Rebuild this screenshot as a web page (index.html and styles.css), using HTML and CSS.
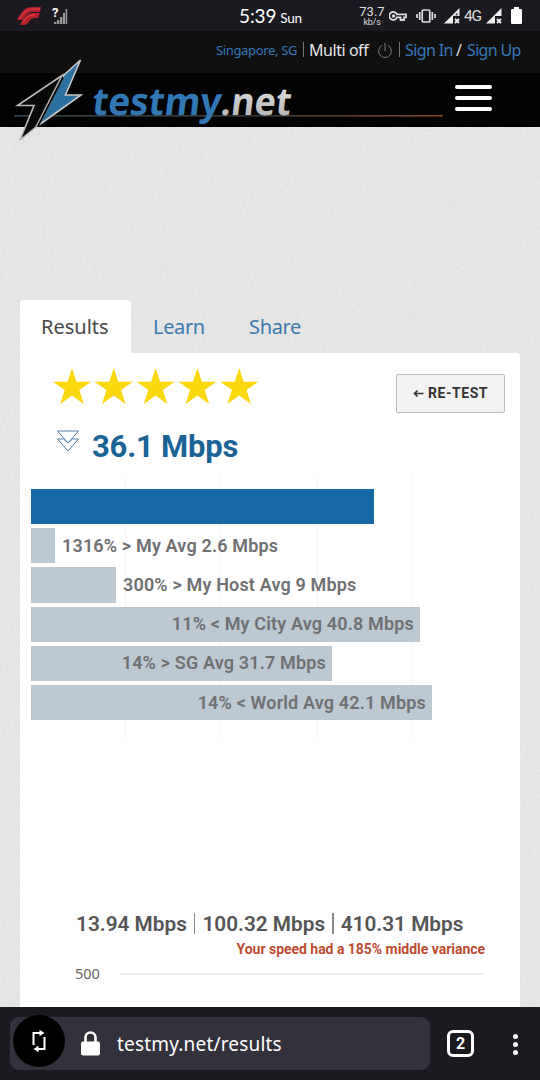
FILE: index.html
```html
<!DOCTYPE html>
<html lang="en">
<head>
<meta charset="utf-8">
<title>testmy.net results</title>
<link rel="stylesheet" href="styles.css">
</head>
<body>
<div class="screen">
  <div class="status">
    <svg class="carrier" width="54" height="31" viewBox="0 0 54 31">
      <path d="M1 20C6 11 9 7 16 7H25L24 12H16C12 12 9 17 7 20Z" fill="#a8222b"/>
      <path d="M4 25C10 15 12 13 19 13H24L22 18H18C13 19 12 25 9 25Z" fill="#b5202a"/>
      <path d="M3 19C8 12 11 9 17 9H24M6 23C11 16 13 15 19 15" fill="none" stroke="#df3439" stroke-width="1.3"/>
      <path d="M38 22h2.4v2H38zM41 20h2.4v4H41zM44 17h2.4v7H44zM47 13h2v11h-2zM49.6 9h1.6v15h-1.6z" fill="#999"/>
      <text x="36" y="17" class="unknown">?</text>
    </svg>
    <div class="clock">5:39 <small>Sun</small></div>
    <div class="rate"><span>73.7</span><small>kb/s</small></div>
    <svg class="key" width="18" height="10" viewBox="0 0 18 10" fill="none" stroke="#ddd" stroke-width="1.8"><path d="M8 3.4H17V6.4H15V9H11.5V6.4H8A4 4 0 1 1 8 3.4Z"/><circle cx="4.6" cy="5" r=".8"/></svg>
    <svg class="vibrate" width="20" height="14" viewBox="0 0 20 14" fill="none" stroke="#ddd" stroke-width="1.7"><rect x="6.2" y="1" width="7.6" height="12" rx="1"/><path d="M3.7 3v8M16.3 3v8M1 5v4M19 5v4"/></svg>
    <svg class="signal" width="18" height="18" viewBox="0 0 18 18"><path d="M1 16.5L16.5 1V9H10v7.5Z" fill="#eee"/><path d="M12 12l4 4m0-4l-4 4" stroke="#eee" stroke-width="1.8"/><path d="M12.5 7.5l2-2v3h-2z" fill="#444"/></svg>
    <span class="net">4G</span>
    <svg class="signal second" width="18" height="18" viewBox="0 0 18 18"><path d="M1 16.5L16.5 1V9H10v7.5Z" fill="#eee"/><path d="M12 12l4 4m0-4l-4 4" stroke="#eee" stroke-width="1.8"/></svg>
    <svg class="battery" width="11" height="17" viewBox="0 0 11 17"><path d="M3 0h5v2h2q1 0 1 1v13q0 1-1 1H1q-1 0-1-1V3q0-1 1-1h2z" fill="#fff"/></svg>
  </div>

  <div class="account">
    <span class="place">Singapore, SG</span><i class="sep"></i><span class="multi">Multi off</span>
    <svg class="power" width="16" height="17" viewBox="0 0 16 17" fill="none" stroke="#777" stroke-width="1"><path d="M5 3.5A6.4 6.4 0 1 0 11 3.5M8 1v8"/></svg>
    <i class="sep"></i><span class="signin">Sign In</span><span class="slash">/</span><span class="signup">Sign Up</span>
  </div>

  <header class="masthead">
    <svg class="logo" width="430" height="90" viewBox="14 55 430 90">
      <defs>
        <linearGradient id="rule" x1="0" x2="1"><stop offset="0" stop-color="#34434c"/><stop offset=".55" stop-color="#3a3836"/><stop offset="1" stop-color="#82412c"/></linearGradient>
        <linearGradient id="silver" x1="0" y1="0" x2="0" y2="1"><stop offset="0" stop-color="#eee"/><stop offset="1" stop-color="#aaa"/></linearGradient>
      </defs>
      <rect x="14" y="115" width="429" height="1.6" fill="url(#rule)"/>
      <path d="M62 75.5L17.5 105.5H34L20 140L36 127Z" fill="#070808" stroke="#b8b8b8" stroke-width="1.6"/>
      <path d="M80.5 60L64 75L39 125L81 95H65.5Z" fill="#2b709f" stroke="#c5c5c5" stroke-width="1.6"/>
      <path d="M63 77L38 126" stroke="#080808" stroke-width="2"/>
      <path d="M61 78L36 127" stroke="#a8a8a8" stroke-width="1"/>
      <g transform="translate(91 115) skewX(-7)"><text class="word blue" textLength="129" lengthAdjust="spacingAndGlyphs">testmy</text></g>
      <g transform="translate(220 115) skewX(-7)"><text class="word silver" textLength="70" lengthAdjust="spacingAndGlyphs">.net</text></g>
    </svg>
    <div class="burger"><i></i><i></i><i></i></div>
  </header>

  <main class="page">
    <svg class="grain" width="540" height="880"><filter id="paper" x="0" y="0" width="100%" height="100%"><feTurbulence type="fractalNoise" baseFrequency=".35" numOctaves="2" seed="4"/><feColorMatrix values="0 0 0 0 .3  0 0 0 0 .3  0 0 0 0 .3  .5 0 0 0 -.2"/></filter><rect width="540" height="880" filter="url(#paper)" opacity=".3"/></svg>
    <nav class="tabs"><span class="tab active">Results</span><span class="tab learn">Learn</span><span class="tab">Share</span></nav>
    <section class="card">
      <div class="top">
        <svg class="stars" width="206" height="38" viewBox="0 0 206 38" fill="#fbd70d">
          <defs><path id="star" d="M19 0L23.5 13.7H38L26.3 22L30.8 36L19 27.4L7.2 36L11.7 22L0 13.7H14.5Z"/></defs>
          <use href="#star"/><use href="#star" x="41.8"/><use href="#star" x="83.6"/><use href="#star" x="125.4"/><use href="#star" x="167.2"/>
        </svg>
        <div class="retest"><svg width="11" height="9" viewBox="0 0 11 9" fill="none" stroke="#333" stroke-width="1.6"><path d="M10.5 4.5H1.5M4.5 1.5L1.5 4.5L4.5 7.5"/></svg><span>RE-TEST</span></div>
      </div>
      <div class="speed">
        <svg width="24" height="23" viewBox="0 0 24 23" fill="none" stroke="#527da4" stroke-width="1"><path d="M1.5 1H22.5L12 13ZM1.5 9H7.5L12 13L16.5 9H22.5L12 21Z"/></svg>
        <strong>36.1 Mbps</strong>
      </div>
      <div class="chart">
        <div class="bar main" style="width:343px"></div>
        <div class="row"><div class="bar" style="width:24px"></div><span class="label">1316% &gt; My Avg 2.6 Mbps</span></div>
        <div class="row"><div class="bar" style="width:85px"></div><span class="label">300% &gt; My Host Avg 9 Mbps</span></div>
        <div class="bar" style="width:389px"><span class="label">11% &lt; My City Avg 40.8 Mbps</span></div>
        <div class="bar" style="width:301px"><span class="label">14% &gt; SG Avg 31.7 Mbps</span></div>
        <div class="bar" style="width:401px"><span class="label">14% &lt; World Avg 42.1 Mbps</span></div>
      </div>
      <div class="stats"><span>13.94 Mbps</span><i></i><span>100.32 Mbps</span><i></i><span>410.31 Mbps</span></div>
      <div class="variance">Your speed had a 185% middle variance</div>
      <div class="axis"><span>500</span><i></i></div>
    </section>
  </main>

  <footer class="browser">
    <div class="address">
      <div class="rotate"><svg width="18" height="24" viewBox="0 0 18 24" fill="none" stroke="#fff" stroke-width="2"><path d="M10 4H3.5V16M8 20H14.5V8"/><path d="M9.5 .8L14.5 4L9.5 7.2ZM8.5 16.8L3.5 20L8.5 23.2Z" fill="#fff" stroke="none"/></svg></div>
      <svg class="lock" width="19" height="25" viewBox="0 0 19 25"><path d="M4.5 11V6.5a5 5 0 0 1 10 0V11" fill="none" stroke="#fff" stroke-width="2.6"/><rect y="10.5" width="19" height="14" rx="2" fill="#fff"/></svg>
      <span class="url">testmy.net/results</span>
    </div>
    <div class="count">2</div>
    <div class="dots"><i></i><i></i><i></i></div>
  </footer>
</div>
</body>
</html>
```
FILE: styles.css
```css
* { box-sizing: border-box; }
body { margin: 0; font-family: Roboto, sans-serif; }
svg { display: block; flex: none; }
span, strong { white-space: nowrap; flex: none; }
.screen { width: 540px; height: 1080px; display: flex; flex-direction: column; overflow: hidden; }

.status { height: 31px; background: #1b1a20; color: #fff; display: flex; align-items: center; padding-left: 16px; flex: none; }
.unknown { font: bold 13px Roboto, sans-serif; fill: #fff; }
.clock { margin-left: 169px; width: 120px; font: 19px/31px Lato, sans-serif; white-space: nowrap; padding-top: 3px; letter-spacing: -.1px; flex: none; }
.clock small { font-size: 13.5px; letter-spacing: -.2px; margin-left: -1px; }
.rate { width: 26px; display: flex; flex-direction: column; align-items: center; font: 13px/12px Roboto, sans-serif; color: #ddd; flex: none; }
.rate small { font-size: 9px; line-height: 11px; margin-top: -1px; letter-spacing: -.2px; }
.rate span { margin-top: 2px; }
.key { margin-left: 4px; }
.vibrate { margin-left: 9px; }
.signal { margin-left: 7px; }
.net { font-size: 15.5px; width: 18px; margin-left: 3px; color: #ddd; letter-spacing: -1.2px; }
.signal.second { margin-left: 3px; }
.battery { margin-left: 8px; }

.account { height: 42px; background: #101011; display: flex; align-items: center; justify-content: flex-end; padding: 0 20px 5px 0; font: 16px/20px "Noto Sans", sans-serif; color: #3678b8; flex: none; }
.place { font-size: 13px; width: 82px; letter-spacing: -.35px; }
.sep { width: 1px; height: 15px; background: #777; margin: 0 5px; flex: none; }
.multi { color: #e5e5e5; width: 60px; letter-spacing: -.45px; }
.power { margin: 2px 1px 0 8px; }
.signin { width: 47px; letter-spacing: -.6px; }
.slash { color: #ddd; width: 7px; margin: 0 4px; }
.signup { width: 53px; letter-spacing: -.65px; }

.masthead { height: 54px; background: #020202; display: flex; justify-content: flex-end; padding: 12px 48px 0 0; position: relative; z-index: 2; flex: none; }
.logo { position: absolute; left: 14px; top: -18px; }
.word { font: bold 38px "Noto Sans", sans-serif; }
.blue { fill: #3178b5; }
.silver { fill: url(#silver); }
.burger { width: 37px; display: flex; flex-direction: column; gap: 7px; }
.burger i { height: 4px; border-radius: 2px; background: #fff; }

.page { height: 880px; flex: none; background: #e6e6e6; position: relative; padding: 173px 20px 0; overflow: hidden; }
.grain { position: absolute; left: 0; top: 0; }
.tabs { position: relative; height: 53px; display: flex; align-items: center; font: 20px/27px "Noto Sans", sans-serif; color: #3979ad; }
.tab { letter-spacing: -.35px; }
.tab.active { width: 111px; height: 53px; line-height: 53px; padding-left: 21px; background: #fff; color: #484848; border-radius: 4px 4px 0 0; letter-spacing: 0; }
.tab.learn { width: 96px; margin-left: 22px; }
.card { position: relative; height: 660px; background: #fff; border-radius: 0 4px 0 0; width: 500px; }
.top { height: 62px; display: flex; justify-content: space-between; padding: 15px 15px 0 33px; }
.retest { width: 109px; height: 39px; margin-top: 6px; background: #f3f3f3; border: 1px solid #bbb; border-radius: 2px; display: flex; align-items: center; justify-content: center; gap: 4px; font-size: 14px; line-height: 16px; padding-bottom: 1px; font-weight: 700; color: #333; letter-spacing: .55px; }
.speed { height: 60px; display: flex; padding: 15px 0 0 36px; }
.speed strong { font-size: 31px; line-height: 34px; color: #1b6396; margin-left: 12px; letter-spacing: -.2px; }
.chart { height: 262px; margin-left: 11px; padding-top: 14px; display: flex; flex-direction: column; gap: 4px; background: linear-gradient(#f5f5f5,#f5f5f5) 94px 0/1px 100% no-repeat, linear-gradient(#f5f5f5,#f5f5f5) 189px 0/1px 100% no-repeat, linear-gradient(#f5f5f5,#f5f5f5) 286px 0/1px 100% no-repeat, linear-gradient(#f5f5f5,#f5f5f5) 381px 0/1px 100% no-repeat; }
.row { display: flex; gap: 7px; align-items: center; }
.bar { height: 35.2px; background: #bcc8d2; display: flex; align-items: center; justify-content: flex-end; padding-right: 6px; flex: none; }
.bar.main { background: #1768a7; }
.label { font-size: 18px; font-weight: 600; line-height: 22px; color: #6f7072; letter-spacing: .16px; }
.stats { margin-top: 174px; padding-left: 56px; height: 25px; display: flex; align-items: center; font-size: 20.8px; font-weight: 600; color: #555; }
.stats i { width: 1.5px; height: 21px; background: #888; margin: 0 7px; }
.variance { font-size: 14px; font-weight: 700; line-height: 18px; margin-top: 4px; padding-right: 35px; text-align: right; color: #bd4b32; letter-spacing: -.03px; }
.axis { display: flex; align-items: center; padding-left: 55px; margin-top: 6px; font: 14.5px/19px "Noto Sans", sans-serif; color: #666; }
.axis i { width: 363px; height: 2px; background: #efefef; margin-left: 20px; }

.browser { height: 73px; background: #1b1a20; color: #fff; display: flex; padding: 10px 0 0 10px; flex: none; }
.address { width: 420px; height: 53px; border-radius: 9px; background: #32313c; display: flex; align-items: center; padding-left: 3px; }
.rotate { width: 52px; height: 52px; border-radius: 50%; background: #000; display: flex; align-items: center; justify-content: center; margin-top: -6px; }
.lock { margin-left: 16px; margin-top: -1px; }
.url { font: 19px/26px "Noto Sans", sans-serif; margin-left: 17px; letter-spacing: .18px; }
.count { width: 27px; height: 27px; margin: 13px 0 0 17px; border: 3px solid #fff; border-radius: 6px; font-size: 16px; line-height: 21px; font-weight: 700; text-align: center; }
.dots { display: flex; flex-direction: column; gap: 3px; margin: 17px 0 0 39px; }
.dots i { width: 5px; height: 5px; border-radius: 50%; background: #fff; }
```
